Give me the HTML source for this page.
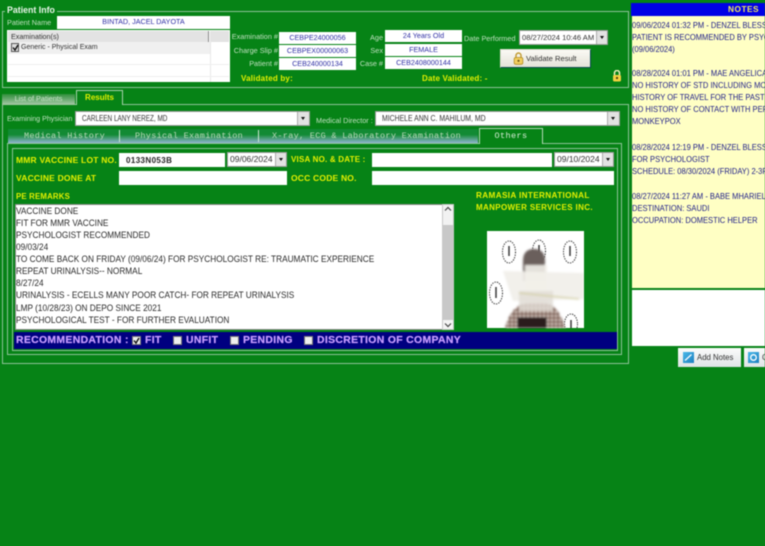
<!DOCTYPE html>
<html><head><meta charset="utf-8">
<style>
html,body{margin:0;padding:0;width:765px;height:546px;overflow:hidden;background:#068316}
#r{position:relative;width:765px;height:546px;overflow:hidden;filter:blur(.45px);font-family:"Liberation Sans",sans-serif;font-size:7.2px;color:#222}
#r div,#r svg{position:absolute;box-sizing:border-box;white-space:nowrap}
.box{border:1px solid #8fc498}
.i{background:#fff;text-align:center;color:#3030a5;font-size:7.2px;line-height:12.5px}
.l{color:#bfe0bf;font-size:7.3px;line-height:10px}
.lr{text-align:right}
.y{color:#e4f000;font-weight:bold;font-size:8.5px;line-height:10px;letter-spacing:.2px}
.dd{background:#fff;border:1px solid #999;color:#333;font-size:8.5px;line-height:13px;padding-left:2px}
.dd span{display:inline-block;transform-origin:left center}
.ar{background:#e2e2e2;border-left:1px solid #aaa;right:0;top:0;bottom:0;width:11px}
.ar:after{content:"";position:absolute;left:3px;top:5px;border:2.5px solid transparent;border-top:3px solid #111;border-bottom:0}
.rm{left:16px;color:#2a2a2a;font-size:9.5px;line-height:12px;transform:scaleX(.87);transform-origin:left center}
.st{font-family:"Liberation Mono",monospace;font-size:8.5px;color:#b9d9b9;letter-spacing:.3px;line-height:12px}
.n{left:632px;color:#1c1c88;font-size:8.3px;line-height:12px;transform:scaleX(.91);transform-origin:left center}
.cb{width:9px;height:9px;background:#eee;border:1px solid #777;top:336px}
.rc{top:334px;color:#c79cff;font-weight:bold;font-size:10.4px;line-height:14px;letter-spacing:.35px;-webkit-text-stroke:.25px #c79cff}
</style></head><body><div id="r">

<div class="box" style="left:2px;top:11px;width:627px;height:77px"></div>
<div style="left:5px;top:5px;height:11px;background:#068316;padding:0 2px;color:#e8f4e8;font-weight:bold;font-size:8.8px;line-height:11px">Patient Info</div>
<div class="l" style="left:7px;top:18px">Patient Name</div>
<div class="i" style="left:57px;top:16px;width:173px;height:13px">BINTAD, JACEL DAYOTA</div>

<div style="left:7px;top:30px;width:223px;height:52px;background:#fff"></div>
<div style="left:8px;top:31px;width:201px;height:11px;background:#e3e3e3;border-right:1px solid #888;color:#333;line-height:11px;padding-left:3px">Examination(s)</div>
<div style="left:210px;top:31px;width:19px;height:11px;background:#e3e3e3"></div>
<div style="left:8px;top:42px;width:202px;height:12px;background:#f0f0f0;color:#333;line-height:12px;padding-left:13px;font-size:7px">Generic - Physical Exam</div>
<div style="left:11px;top:43px;width:8px;height:9px;background:#ddd;border:1px solid #555"></div>
<svg style="left:11px;top:43px" width="9" height="9"><path d="M2 4.5L4 7L7 2" fill="none" stroke="#111" stroke-width="1.4"/></svg>
<div style="left:210px;top:42px;width:1px;height:40px;background:#e8e8e8"></div>
<div style="left:8px;top:64px;width:221px;height:1px;background:#eee"></div>
<div style="left:8px;top:76px;width:221px;height:1px;background:#eee"></div>

<div class="l lr" style="left:225px;top:32px;width:53px">Examination #</div>
<div class="l lr" style="left:225px;top:46px;width:53px">Charge Slip #</div>
<div class="l lr" style="left:225px;top:59px;width:53px">Patient #</div>
<div class="i" style="left:279px;top:32px;width:77px;height:12px">CEBPE24000056</div>
<div class="i" style="left:279px;top:45px;width:77px;height:12px">CEBPEX00000063</div>
<div class="i" style="left:279px;top:58px;width:77px;height:12px">CEB240000134</div>
<div class="l lr" style="left:358px;top:33px;width:25px">Age</div>
<div class="l lr" style="left:358px;top:46px;width:25px">Sex</div>
<div class="l lr" style="left:358px;top:59px;width:25px">Case #</div>
<div class="i" style="left:385px;top:30px;width:77px;height:12px">24 Years Old</div>
<div class="i" style="left:385px;top:44px;width:77px;height:12px">FEMALE</div>
<div class="i" style="left:385px;top:57px;width:77px;height:12px">CEB2408000144</div>
<div class="l" style="left:464px;top:34px">Date Performed</div>
<div class="dd" style="left:519px;top:30px;width:89px;height:15px;font-size:7.6px">08/27/2024 10:46 AM<div class="ar"></div></div>
<div style="left:500px;top:49px;width:91px;height:19px;background:linear-gradient(#fbfaf5,#e4e2d8);border:1px solid #dedbd0;border-right:1px solid #0c4a50;border-bottom:1px solid #0c4a50;color:#333;line-height:17px;padding-left:25px;font-size:7.6px">Validate Result</div>
<svg style="left:513px;top:52px" width="11" height="13" viewBox="0 0 11 13"><path d="M3 6V3.5a2.5 2.5 0 0 1 5 0V6" fill="none" stroke="#c09a30" stroke-width="1.4"/><rect x="1.2" y="5.5" width="8.6" height="6.8" rx="1.5" fill="#f2cf60" stroke="#b08a20" stroke-width=".8"/><circle cx="5.5" cy="8.8" r="1.1" fill="#6b5210"/></svg>
<div class="y" style="left:241px;top:74px;font-size:8px">Validated by:</div>
<div class="y" style="left:422px;top:74px;font-size:8px">Date Validated: -</div>
<svg style="left:612px;top:70px" width="10" height="12" viewBox="0 0 10 12"><path d="M2.5 5V3a2.5 2.5 0 0 1 5 0V5" fill="none" stroke="#f6f2c0" stroke-width="1.5"/><rect x="1" y="5" width="8" height="6.5" rx="1.2" fill="#f3d040"/><circle cx="5" cy="8" r="1.1" fill="#4a3a08"/></svg>

<div class="box" style="left:2px;top:104px;width:627px;height:260px"></div>
<div style="left:2px;top:94px;width:73px;height:11px;background:linear-gradient(#2f8f3c,#a8c9a8);color:#c9e2c9;text-align:center;font-size:7.3px;line-height:9px">List of Patients</div>
<div style="left:76px;top:90px;width:47px;height:15px;background:#068316;border:1px solid #a9d2ae;border-bottom:0;color:#e4f000;font-weight:bold;text-align:center;font-size:8px;line-height:13px">Results</div>

<div class="l" style="left:7px;top:114px;font-size:7.1px">Examining Physician</div>
<div class="dd" style="left:75px;top:111px;width:235px;height:15px;padding-left:6px;font-size:8.2px"><span style="transform:scaleX(.78)">CARLEEN LANY NEREZ, MD</span><div class="ar" style="width:12px"></div></div>
<div class="l" style="left:316px;top:116px">Medical Director :</div>
<div class="dd" style="left:375px;top:111px;width:245px;height:15px;padding-left:6px;font-size:8.2px"><span style="transform:scaleX(.84)">MICHELE ANN C. MAHILUM, MD</span><div class="ar" style="width:12px"></div></div>

<div style="left:8px;top:129px;width:470px;height:14px;background:linear-gradient(#128a34,#128a34 40%,#8fb4d0)"></div>
<div class="st" style="left:24px;top:130px">Medical History</div>
<div style="left:119px;top:130px;width:1px;height:12px;background:#cfe6d4"></div>
<div class="st" style="left:135px;top:130px">Physical Examination</div>
<div style="left:258px;top:130px;width:1px;height:12px;background:#cfe6d4"></div>
<div class="st" style="left:272px;top:130px">X-ray, ECG &amp; Laboratory Examination</div>
<div class="box" style="left:7px;top:143px;width:615px;height:212px"></div>
<div class="box" style="left:12px;top:148px;width:606px;height:203px"></div>
<div style="left:479px;top:128px;width:64px;height:16px;background:#068316;border:1px solid #b5dab9;border-bottom:0;text-align:center;line-height:14px;font-family:'Liberation Mono',monospace;font-size:8.5px;letter-spacing:.4px;color:#d5ecd5">Others</div>

<div class="y" style="left:16px;top:155px">MMR VACCINE LOT NO.</div>
<div style="left:119px;top:153px;width:106px;height:14px;background:#fff;color:#222;font-weight:bold;font-size:8px;line-height:15px;padding-left:7px;letter-spacing:.4px">0133N053B</div>
<div class="dd" style="left:227px;top:152px;width:60px;height:15px">09/06/2024<div class="ar"></div></div>
<div class="y" style="left:291px;top:155px;font-size:8px">VISA NO. &amp; DATE :</div>
<div style="left:372px;top:153px;width:180px;height:14px;background:#fff"></div>
<div class="dd" style="left:554px;top:152px;width:60px;height:15px">09/10/2024<div class="ar"></div></div>
<div class="y" style="left:16px;top:173px">VACCINE DONE AT</div>
<div style="left:119px;top:171px;width:168px;height:14px;background:#fff"></div>
<div class="y" style="left:291px;top:173px">OCC CODE NO.</div>
<div style="left:372px;top:171px;width:242px;height:14px;background:#fff"></div>
<div class="y" style="left:16px;top:192px;font-size:7.8px">PE REMARKS</div>

<div style="left:15px;top:204px;width:428px;height:126px;background:#fff;border:1px solid #888"></div>
<div class="rm" style="top:206px">VACCINE DONE</div>
<div class="rm" style="top:218px">FIT FOR MMR VACCINE</div>
<div class="rm" style="top:230px">PSYCHOLOGIST RECOMMENDED</div>
<div class="rm" style="top:242px">09/03/24</div>
<div class="rm" style="top:254px">TO COME BACK ON FRIDAY (09/06/24) FOR PSYCHOLOGIST RE: TRAUMATIC EXPERIENCE</div>
<div class="rm" style="top:266px">REPEAT URINALYSIS-- NORMAL</div>
<div class="rm" style="top:278px">8/27/24</div>
<div class="rm" style="top:290px">URINALYSIS - ECELLS MANY POOR CATCH- FOR REPEAT URINALYSIS</div>
<div class="rm" style="top:303px">LMP (10/28/23) ON DEPO SINCE 2021</div>
<div class="rm" style="top:315px">PSYCHOLOGICAL TEST - FOR FURTHER EVALUATION</div>
<div style="left:442px;top:204px;width:12px;height:126px;background:#c8c8c8"></div>
<div style="left:443px;top:205px;width:10px;height:20px;background:#f2f2f2"></div>
<div style="left:443px;top:320px;width:10px;height:9px;background:#f4f4f4"></div>
<svg style="left:444px;top:206px" width="8" height="6"><path d="M1 4.5L4 1.5L7 4.5" fill="none" stroke="#444" stroke-width="1.2"/></svg>
<svg style="left:444px;top:322px" width="8" height="6"><path d="M1 1.5L4 4.5L7 1.5" fill="none" stroke="#444" stroke-width="1.2"/></svg>

<div class="y" style="left:476px;top:191px;font-size:8.2px;letter-spacing:.35px">RAMASIA INTERNATIONAL</div>
<div class="y" style="left:476px;top:203px;font-size:8px;letter-spacing:.35px">MANPOWER SERVICES INC.</div>

<svg style="left:487px;top:231px" width="97" height="98" viewBox="0 0 97 98">
<defs>
<filter id="b"><feGaussianBlur stdDeviation="1"/></filter>
<pattern id="p" width="4" height="4" patternUnits="userSpaceOnUse"><rect width="4" height="4" fill="#8a6a5e"/><rect width="2" height="2" fill="#e8dcd4"/><rect x="2" y="2" width="1.5" height="1.5" fill="#4a3028"/></pattern>
</defs>
<rect width="97" height="97" fill="#fff"/>
<g fill="none" stroke="#555" stroke-width="1.1" stroke-dasharray="1.5 1">
<ellipse cx="22" cy="21" rx="6.5" ry="11"/><ellipse cx="52" cy="20" rx="6.5" ry="11"/><ellipse cx="83" cy="21" rx="6.5" ry="11"/><ellipse cx="9" cy="62" rx="6.5" ry="11"/><ellipse cx="84" cy="93" rx="6.5" ry="10"/></g>
<path d="M22 15v10M52 14v9M83 15v10M9 56v11M84 89v8" stroke="#444" stroke-width="1.6"/>
<g filter="url(#b)">
<path d="M36 50V30Q36 18 47 18Q58 18 58 30V50Z" fill="#6b5f5c"/>
<path d="M18 97Q24 74 40 72H58Q72 74 78 97Z" fill="url(#p)"/>
<path d="M30 97V86H60V97Z" fill="#2a1f1c"/>
<path d="M16 40L97 42V68L26 70Z" fill="#f1efe9" opacity=".92"/>
<rect x="38" y="34" width="22" height="36" fill="#f2efe9" opacity=".9"/>
<rect x="32" y="60" width="34" height="20" fill="#e2ddd6" opacity=".85"/>
<path d="M32 62L92 68" stroke="#d2ce9e" stroke-width="1.2"/>
</g>
</svg>

<div style="left:14px;top:332px;width:603px;height:17px;background:#000080"></div>
<div class="rc" style="left:16px">RECOMMENDATION :</div>
<div class="cb" style="left:132px"></div>
<svg style="left:132px;top:336px" width="9" height="9"><path d="M2 4.5L4 7L7 2" fill="none" stroke="#111" stroke-width="1.4"/></svg>
<div class="rc" style="left:145px">FIT</div>
<div class="cb" style="left:173px"></div>
<div class="rc" style="left:186px">UNFIT</div>
<div class="cb" style="left:230px"></div>
<div class="rc" style="left:243px">PENDING</div>
<div class="cb" style="left:304px"></div>
<div class="rc" style="left:317px">DISCRETION OF COMPANY</div>

<div style="left:631px;top:3px;width:134px;height:13px;background:#0000e6"></div>
<div style="left:728px;top:4px;color:#f0e860;font-weight:bold;font-size:8.3px;line-height:11px;letter-spacing:.5px">NOTES</div>
<div style="left:632px;top:16px;width:133px;height:272px;background:#ffffc4"></div>
<div class="n" style="top:19px">09/06/2024 01:32 PM - DENZEL BLESS DELA CRUZ</div>
<div class="n" style="top:31px">PATIENT IS RECOMMENDED BY PSYCHOLOGIST</div>
<div class="n" style="top:43px">(09/06/2024)</div>
<div class="n" style="top:67px">08/28/2024 01:01 PM - MAE ANGELICA SANTOS</div>
<div class="n" style="top:79px">NO HISTORY OF STD INCLUDING MONKEYPOX</div>
<div class="n" style="top:91px">HISTORY OF TRAVEL FOR THE PAST 21 DAYS</div>
<div class="n" style="top:103px">NO HISTORY OF CONTACT WITH PERSON WITH</div>
<div class="n" style="top:115px">MONKEYPOX</div>
<div class="n" style="top:141px">08/28/2024 12:19 PM - DENZEL BLESS DELA CRUZ</div>
<div class="n" style="top:153px">FOR PSYCHOLOGIST</div>
<div class="n" style="top:165px">SCHEDULE: 08/30/2024 (FRIDAY) 2-3PM</div>
<div class="n" style="top:190px">08/27/2024 11:27 AM - BABE MHARIEL REYES</div>
<div class="n" style="top:202px">DESTINATION: SAUDI</div>
<div class="n" style="top:214px">OCCUPATION: DOMESTIC HELPER</div>
<div style="left:632px;top:290px;width:133px;height:56px;background:#fff"></div>

<div style="left:678px;top:348px;width:63px;height:19px;background:linear-gradient(#fbfbfb,#dfe4e6);color:#333;line-height:19px;padding-left:19px;font-size:7.8px">Add Notes</div>
<div style="left:683px;top:352px;width:11px;height:11px;background:linear-gradient(135deg,#4ab8e8,#1c7fc0)"></div>
<svg style="left:684px;top:353px" width="9" height="9"><path d="M1 7.5L7.5 1.5" stroke="#fff" stroke-width="1.2"/></svg>
<div style="left:744px;top:348px;width:21px;height:19px;background:linear-gradient(#fbfbfb,#dfe4e6);color:#333;line-height:19px;padding-left:18px;font-size:7.8px">C</div>
<div style="left:748px;top:352px;width:11px;height:11px;background:linear-gradient(135deg,#4ab8e8,#1c7fc0)"></div>
<svg style="left:749px;top:353px" width="9" height="9"><circle cx="4.5" cy="4.5" r="2.8" fill="none" stroke="#fff" stroke-width="1.3"/></svg>

</div></body></html>
